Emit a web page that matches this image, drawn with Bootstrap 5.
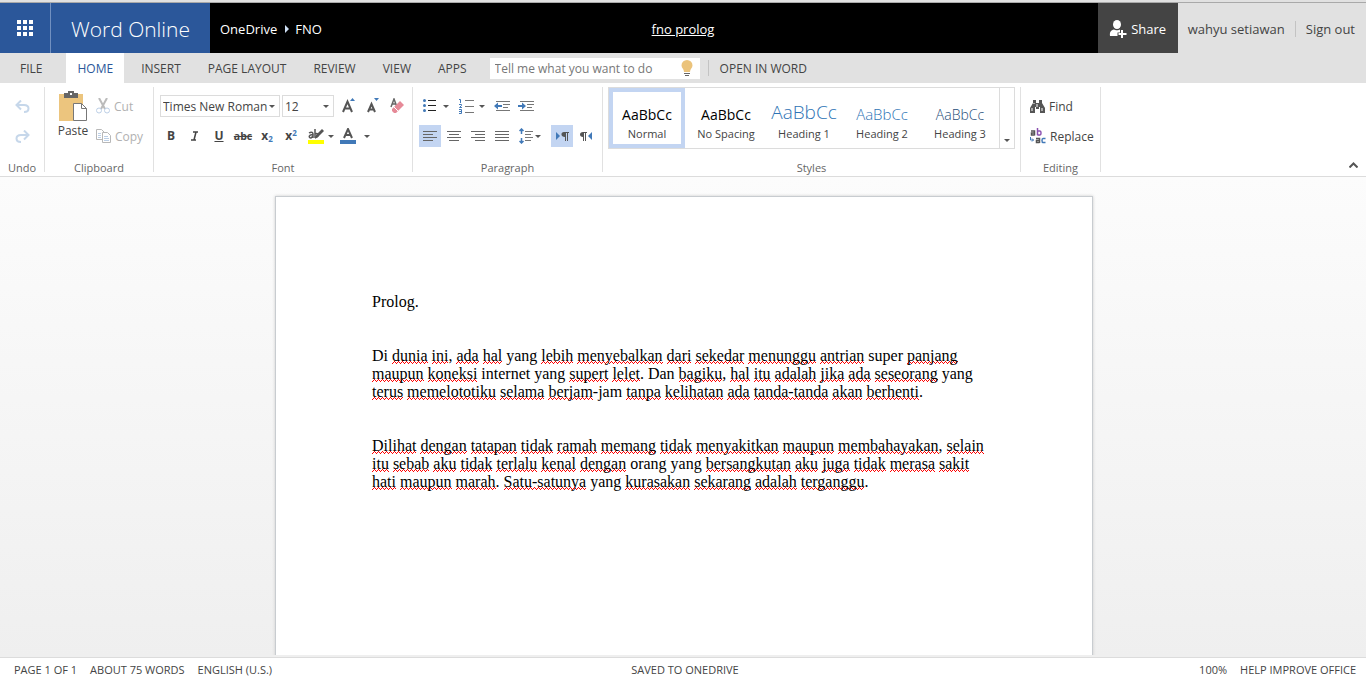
<!DOCTYPE html>
<html lang="en">
<head>
<meta charset="utf-8">
<meta name="viewport" content="width=device-width, initial-scale=1">
<title>fno prolog - Word Online</title>
<link href="https://cdn.jsdelivr.net/npm/bootstrap@5.3.0/dist/css/bootstrap.min.css" rel="stylesheet">
<style>
  :root { --brand:#2b579a; --chrome:#e1e1e1; --ink:#444; --blue:#4179b8; --pick:#c3d5f2; }
  body { font-family:"Open Sans","Noto Sans",sans-serif; font-size:12px; line-height:16px; color:var(--ink); background:#fff; }
  button { font:inherit; color:inherit; background:none; border:0; padding:0; }
  a { color:inherit; text-decoration:none; }
  svg { display:block; flex:none; }
  /* header */
  .edge { height:3px; background:var(--chrome); border-bottom:1px solid #a9a9a9; }
  .topbar { display:grid; grid-template-columns:1fr auto 1fr; height:50px; background:#000; color:#fff; font-size:13px; }
  .topbar > a, .topbar nav, .share, .account, .brandname { padding-top:2px; }
  .waffle { width:51px; background:var(--brand); border-right:1px solid #7190c0; }
  .brandname { width:159px; background:var(--brand); font-size:21px; font-weight:300; }
  .topbar nav { padding-left:10px; }
  .share { width:80px; background:var(--ink); }
  .account { background:var(--chrome); color:var(--ink); padding-left:10px; padding-right:11px; }
  .account a + a { border-left:1px solid #c3c3c3; margin-left:10px; padding-left:10px; }
  /* tabs */
  .tabs { height:30px; background:var(--chrome); gap:1px; }
  .tabs button, .tabs > a { height:30px; padding:2px 13px 0; }
  .tabs .file { padding:2px 23px 0 20px; }
  .tabs .on { background:#fff; color:var(--brand); padding:2px 11px 0; margin-right:3px; }
  .tell { width:210px; height:21px; background:#fff; margin-left:9px; padding-right:7px; }
  .tell input { border:0; outline:0; background:none; width:100%; min-width:0; padding:2px 5px 0; color:var(--ink); }
  .tell input::placeholder { color:#777; opacity:1; }
  .rule { width:1px; height:16px; background:#c3c3c3; margin-left:7px; }
  .tabs > .openword { padding:2px 10px 0; }
  /* ribbon */
  .ribbon { padding:4px 0; height:94px; border-bottom:1px solid #dcdcdc; }
  .grp { display:flex; flex-direction:column; justify-content:space-between; border-right:1px solid #e1e1e1; flex:none; }
  .grp h2 { font-size:11px; line-height:16px; font-weight:400; color:#666; text-align:center; margin:0 0 -4px; }
  .g-undo { width:45px; } .g-clip { width:109px; } .g-font { width:259px; } .g-par { width:190px; } .g-sty { width:418px; } .g-edit { width:80px; }
  .rows { display:flex; flex-direction:column; gap:8px; padding:8px 0 0 6px; }
  .rows > div { display:flex; align-items:center; gap:2px; height:22px; }
  .tool { width:22px; height:22px; display:flex; align-items:center; justify-content:center; }
  .tool.on { background:var(--pick); }
  .drop { width:34px; height:22px; display:flex; align-items:center; justify-content:space-between; padding:0 4px; }
  .drop::after { content:""; border:3px solid transparent; border-top-color:#555; border-bottom:0; }
  .cmd { display:flex; align-items:center; gap:4px; padding:0 0 0 3px; }
  .cmd span { padding-top:2px; }
  .off { color:#b1b1b1; }
  .script { font-size:8px; color:var(--blue); }
  .box { height:22px; border:1px solid #dcdcdc; border-radius:0; padding:1px 2px 0; color:var(--ink); appearance:none; background:#fff url("data:image/svg+xml,%3Csvg xmlns='http://www.w3.org/2000/svg' width='6' height='3'%3E%3Cpath d='M0 0h6L3 3z' fill='%23555'/%3E%3C/svg%3E") no-repeat right 4px center; }
  .face { width:120px; } .size { width:52px; margin-right:2px; }
  .gallery { display:flex; height:62px; margin:0 5px; border:1px solid #dcdcdc; }
  .gallery .look { width:78px; height:60px; padding-bottom:2px; border:4px solid transparent; display:flex; flex-direction:column; justify-content:flex-end; align-items:center; font-size:11px; line-height:16px; white-space:nowrap; }
  .gallery .look.on { border-color:var(--pick); width:76px; margin-right:2px; }
  .look b { font-weight:400; font-size:14px; line-height:22px; color:#000; }
  .look .h1s { font-size:19px; line-height:28px; font-weight:300; color:#2e74b5; }
  .look .h2s { font-size:15px; line-height:24px; font-weight:300; color:#2e74b5; }
  .look .h3s { font-weight:300; color:#1f4d78; }
  .more { flex:1; border-left:1px solid #dcdcdc; display:flex; align-items:flex-end; justify-content:center; padding-bottom:6px; }
  .more::after { content:""; border:3px solid transparent; border-top-color:#555; border-bottom:0; }
  /* document */
  .canvas { flex:1; min-height:0; overflow:hidden; padding:19px 0 0 2px; margin-bottom:2px; }
  .desk { background:linear-gradient(#fcfcfc,#efefef); flex:1; min-height:0; }
  .paper { width:818px; max-width:100%; min-height:1058px; margin:0 auto; padding:96px; background:#fff; border:1px solid #c8ccd0; box-shadow:0 0 3px #ccc; font:16px/18px "Liberation Serif",serif; color:#000; }
  .paper p { margin:0 0 36px; }
  /* spelling marks: three one-pixel rows that make a zigzag */
  .paper u {
    text-decoration:none; background-repeat:repeat-x; background-size:4px 1px,2px 1px,4px 1px;
    background-image:
      linear-gradient(90deg,red 1px,transparent 1px),
      linear-gradient(90deg,transparent 1px,red 1px),
      linear-gradient(90deg,transparent 2px,red 2px,red 3px,transparent 3px);
    background-position:0 100%,0 calc(100% - 1px),0 calc(100% - 2px);
  }
  .status { height:23px; border-top:1px solid #dcdcdc; background:#fff; padding:2px 10px 0 14px; font-size:11px; display:grid; grid-template-columns:1fr auto 1fr; align-items:center; }
  .status div { display:flex; gap:13px; }
</style>
</head>
<body class="vh-100 d-flex flex-column overflow-hidden">
<div class="edge"></div>
<header class="topbar">
  <div class="d-flex">
    <button class="waffle d-flex align-items-center justify-content-center" aria-label="Apps">
      <svg width="16" height="16" fill="#fff"><path d="M0 0h4v4H0zM6 0h4v4H6zM12 0h4v4h-4zM0 6h4v4H0zM6 6h4v4H6zM12 6h4v4h-4zM0 12h4v4H0zM6 12h4v4H6zM12 12h4v4h-4z"/></svg>
    </button>
    <a href="#" class="brandname d-flex align-items-center justify-content-center">Word Online</a>
    <nav class="d-flex align-items-center" aria-label="Location">
      <a href="#">OneDrive</a>
      <svg class="ms-2 me-1" width="6" height="8" fill="#cfe0f5"><path d="M0 0l4 4-4 4z"/></svg>
      <a href="#">FNO</a>
    </nav>
  </div>
  <a href="#" class="align-self-center text-decoration-underline">fno prolog</a>
  <div class="d-flex justify-content-end">
    <button class="share d-flex align-items-center justify-content-center gap-1">
      <svg width="18" height="18" fill="#fff"><ellipse cx="8" cy="4.500" rx="4" ry="4.500"/><path d="M5 9.500c1 1 5 1 6 0v3H8.500V16H1c-.5-4 1-6 4-6.500z"/><path d="M12 10h2v3h3.500v2H14v3h-2v-3H9.500v-2H12z"/></svg>
      Share</button>
    <div class="account d-flex align-items-center"><a href="#">wahyu setiawan</a><a href="#">Sign out</a></div>
  </div>
</header>
<nav class="tabs d-flex align-items-center" aria-label="Ribbon tabs">
  <button class="file">FILE</button><button class="on">HOME</button><button>INSERT</button><button>PAGE LAYOUT</button><button>REVIEW</button><button>VIEW</button><button>APPS</button>
  <div class="tell d-flex align-items-center">
    <input type="text" aria-label="Tell me" placeholder="Tell me what you want to do">
    <svg width="12" height="16"><path d="M6 0a5.500 5.500 0 0 1 5.500 5.500C11.500 8 9 9 9 12H3C3 9 .5 8 .5 5.500A5.500 5.500 0 0 1 6 0z" fill="#ebc37b"/><path d="M3 13h6v1H3zM4 15h4v1H4z" fill="#666"/></svg>
  </div>
  <span class="rule"></span>
  <a href="#" class="openword d-flex align-items-center">OPEN IN WORD</a>
</nav>
<section class="ribbon d-flex" aria-label="Home ribbon">
  <div class="grp g-undo">
    <div class="rows align-items-center ps-0">
      <div><button class="tool" aria-label="Undo"><svg width="15" height="13" fill="none" stroke="#c6d7ea" stroke-width="2"><path d="M6 .5L1.500 5 6 9.500M2 5h7c6 0 6 7 0 7"/></svg></button></div>
      <div><button class="tool" aria-label="Redo"><svg width="15" height="13" fill="none" stroke="#c6d7ea" stroke-width="2"><path d="M9 .5L13.500 5 9 9.500M13 5H6c-6 0-6 7 0 7"/></svg></button></div>
    </div>
    <h2>Undo</h2>
  </div>
  <div class="grp g-clip">
    <div class="d-flex">
      <button class="d-flex flex-column align-items-center ms-2 ps-1 pt-1">
        <svg width="32" height="32"><path d="M2 3h24v27H2z" fill="#ecc57e"/><path d="M7 2h4V0h6v2h4v5H7z" fill="#666"/><path d="M13 2h2v2h-2z" fill="#fff"/><path d="M16.500 12.500h8l5 5v12h-13z" fill="#fff" stroke="#777"/><path d="M24.500 12.500v5h5" fill="none" stroke="#777"/></svg>
        <span>Paste</span>
      </button>
      <div class="rows ps-1">
        <div><button class="off cmd"><svg width="14" height="16" fill="none" stroke="#bbb" stroke-width="2"><path d="M3 0l6 11M11 0L5 11"/><g stroke="#bccfe6" stroke-width="1"><circle cx="3" cy="12.500" r="2.500"/><circle cx="11" cy="12.500" r="2.500"/></g></svg><span>Cut</span></button></div>
        <div><button class="off cmd"><svg width="15" height="14" fill="#fff" stroke="#b8b8b8"><path d="M.5.5h5l3 3v7h-8z"/><path d="M6.500 3.500h5l3 3v7h-8z"/><path d="M2 4.500h3M2 6.500h3M2 8.500h3M8 7.500h4M8 9.500h5M8 11.500h5" stroke="#bccfe6"/></svg><span>Copy</span></button></div>
      </div>
    </div>
    <h2>Clipboard</h2>
  </div>
  <div class="grp g-font">
    <div class="rows">
      <div>
        <select class="box face" aria-label="Font"><option>Times New Roman</option></select>
        <select class="box size" aria-label="Font size"><option>12</option></select>
        <button class="tool" aria-label="Grow font"><svg width="14" height="16"><path d="M1 14L5.500 3.500 10 14M3 10.500h5" fill="none" stroke="#555" stroke-width="2"/><path d="M8 3l2.500-3L13 3z" fill="#4179b8"/></svg></button>
        <button class="tool" aria-label="Shrink font"><svg width="14" height="16"><path d="M2 14l3.500-8L9 14M3.500 11.500h4" fill="none" stroke="#555" stroke-width="2"/><path d="M8 0h5l-2.500 3z" fill="#4179b8"/></svg></button>
        <button class="tool" aria-label="Clear formatting"><svg width="15" height="16"><path d="M1 9l3-8 3 8M2 6h4" fill="none" stroke="#666" stroke-width="1.500"/><path d="M2 11l8-8 4 4-8 8H4l-2-2z" fill="#e68a98"/><path d="M4 9l4 4" stroke="#fff"/></svg></button>
      </div>
      <div>
        <button class="tool fw-bold" aria-label="Bold">B</button>
        <button class="tool" aria-label="Italic"><svg width="8" height="10" fill="none" stroke="#444" stroke-width="1.500"><path d="M2 1h5M0 9h5M5 1L3 9"/></svg></button>
        <button class="tool fw-bold text-decoration-underline" aria-label="Underline">U</button>
        <button class="tool fw-bold" aria-label="Strikethrough"><small class="text-decoration-line-through">abc</small></button>
        <button class="tool fw-bold" aria-label="Subscript"><span>x<sub class="script">2</sub></span></button>
        <button class="tool fw-bold" aria-label="Superscript"><span>x<sup class="script">2</sup></span></button>
        <button class="drop" aria-label="Highlight"><svg width="16" height="16"><path d="M0 12h16v4H0z" fill="#ff0"/><path d="M1 5c3-2 4 0 4 1v4M5 7C1 6 0 10 3 10l2-2M7 1v9M7 6c4-2 4 4 0 3" fill="none" stroke="#555" stroke-width="1.500"/><path d="M14 1l2 2-6 6-3 2 1-4z" fill="#555"/></svg></button>
        <button class="drop ps-0" aria-label="Font color"><svg width="16" height="16"><path d="M0 12h16v4H0z" fill="#4179b8"/><path d="M4 10L8 1l4 9M5.500 7h5" fill="none" stroke="#555" stroke-width="2"/></svg></button>
      </div>
    </div>
    <h2>Font</h2>
  </div>
  <div class="grp g-par">
    <div class="rows">
      <div>
        <button class="drop" aria-label="Bullets"><svg width="13" height="14"><path d="M5 1.500h8M5 6.500h8M5 11.500h8" stroke="#222" stroke-width="1"/><g fill="#4179b8"><circle cx="1.500" cy="1.500" r="1.500"/><circle cx="1.500" cy="6.500" r="1.500"/><circle cx="1.500" cy="11.500" r="1.500"/></g></svg></button>
        <button class="drop" aria-label="Numbering"><svg width="15" height="16" fill="none"><path d="M6 2.500h9M6 8.500h9M6 14.500h9" stroke="#777"/><path d="M0 1.500h1.500V5M0 6.500h2.500v1L.5 9.500H3M0 11.500h2.500v4H0M0 13.500h2" stroke="#4179b8"/></svg></button>
        <button class="tool" aria-label="Decrease indent"><svg width="16" height="12"><path d="M2 1.500h14M9 4.500h7M9 7.500h5M2 10.500h14" stroke="#777"/><path d="M0 6l4-3.500V5h4v2H4v2.500z" fill="#4179b8"/></svg></button>
        <button class="tool" aria-label="Increase indent"><svg width="16" height="12"><path d="M2 1.500h14M9 4.500h7M9 7.500h5M2 10.500h14" stroke="#777"/><path d="M8 6L4 2.500V5H0v2h4v2.500z" fill="#4179b8"/></svg></button>
      </div>
      <div>
        <button class="tool on" aria-label="Align left"><svg width="14" height="12" stroke="#666"><path d="M0 1.500h14M0 4.500h10M0 7.500h14M0 10.500h10"/></svg></button>
        <button class="tool" aria-label="Center"><svg width="14" height="12" stroke="#666"><path d="M0 1.500h14M2 4.500h10M0 7.500h14M2 10.500h10"/></svg></button>
        <button class="tool" aria-label="Align right"><svg width="14" height="12" stroke="#666"><path d="M0 1.500h14M4 4.500h10M0 7.500h14M4 10.500h10"/></svg></button>
        <button class="tool" aria-label="Justify"><svg width="14" height="12" stroke="#666"><path d="M0 1.500h14M0 4.500h14M0 7.500h14M0 10.500h14"/></svg></button>
        <button class="drop ps-1 pe-2" aria-label="Line spacing"><svg width="15" height="16" fill="none"><path d="M6 3.500h8M6 6.500h6M6 9.500h8M6 12.500h6" stroke="#777"/><path d="M2.500 1v5M2.500 10v5M.5 3l2-2 2 2M.5 13l2 2 2-2" stroke="#4179b8" stroke-width="1.500"/></svg></button>
        <button class="tool on" aria-label="Left to right"><svg width="14" height="10"><path d="M1 1l4 4-4 4z" fill="#4179b8"/><path d="M9 1h5v1h-1v8h-1V2h-1v8h-1V6C5.500 6 5.500 1 9 1z" fill="#555"/></svg></button>
        <button class="tool" aria-label="Right to left"><svg width="14" height="10"><path d="M13 1L9 5l4 4z" fill="#4179b8"/><path d="M4 1h4v1H7v8H6V2H5v8H4V6C0 6 0 1 4 1z" fill="#555"/></svg></button>
      </div>
    </div>
    <h2>Paragraph</h2>
  </div>
  <div class="grp g-sty">
    <div class="gallery">
      <button class="look on"><b>AaBbCc</b>Normal</button>
      <button class="look"><b>AaBbCc</b>No Spacing</button>
      <button class="look"><b class="h1s">AaBbCc</b>Heading 1</button>
      <button class="look"><b class="h2s">AaBbCc</b>Heading 2</button>
      <button class="look"><b class="h3s">AaBbCc</b>Heading 3</button>
      <button class="more" aria-label="More styles"></button>
    </div>
    <h2>Styles</h2>
  </div>
  <div class="grp g-edit">
    <div class="rows">
      <div><button class="cmd"><svg width="15" height="13" fill="#555"><path d="M3 0h3v3h3V0h3v3l3 5v5h-5V7H9v2H6V7H5v6H0V8l3-5z"/><path d="M2 8v3M4 3v1M12 8v3M7 4v3" stroke="#fff" stroke-width="1"/></svg><span>Find</span></button></div>
      <div><button class="cmd"><svg width="16" height="16" fill="none" stroke="#555" stroke-width="1.500"><path d="M1 3h3.500v4.500M4.500 5H1.500v2h3"/><path d="M7.500 0v7.300M7.500 3H10q1 0 1 2t-1 2H7.500" stroke="#8a4fb0"/><path d="M6 10.500h3.500V15M9.500 12.500h-3v2h3"/><path d="M15.500 10.500H13q-1 0-1 2t1 2h2.500" stroke="#4179b8"/><path d="M.5 9v3h3M2 10.500L3.500 12 2 13.500" stroke="#4179b8" stroke-width="1"/></svg><span>Replace</span></button></div>
    </div>
    <h2>Editing</h2>
  </div>
  <button class="ms-auto align-self-end me-1 p-1" aria-label="Collapse ribbon"><svg width="9" height="6" fill="none" stroke="#555" stroke-width="2"><path d="M.5 5.500l4-4 4 4"/></svg></button>
</section>
<main class="desk d-flex flex-column">
  <div class="canvas">
    <article class="paper">
      <p>Prolog.</p>
      <p>Di <u>dunia</u> <u>ini</u>, <u>ada</u> <u>hal</u> yang <u>lebih</u> <u>menyebalkan</u> <u>dari</u> <u>sekedar</u> <u>menunggu</u> <u>antrian</u> super <u>panjang</u> <u>maupun</u> <u>koneksi</u> internet yang <u>supert</u> <u>lelet</u>. Dan <u>bagiku</u>, <u>hal</u> <u>itu</u> <u>adalah</u> <u>jika</u> <u>ada</u> <u>seseorang</u> yang <u>terus</u> <u>memelototiku</u> <u>selama</u> <u>berjam</u>-jam <u>tanpa</u> <u>kelihatan</u> <u>ada</u> <u>tanda-tanda</u> <u>akan</u> <u>berhenti</u>.</p>
      <p><u>Dilihat</u> <u>dengan</u> <u>tatapan</u> <u>tidak</u> <u>ramah</u> <u>memang</u> <u>tidak</u> <u>menyakitkan</u> <u>maupun</u> <u>membahayakan</u>, <u>selain</u> <u>itu</u> <u>sebab</u> <u>aku</u> <u>tidak</u> <u>terlalu</u> <u>kenal</u> <u>dengan</u> orang yang <u>bersangkutan</u> <u>aku</u> <u>juga</u> <u>tidak</u> <u>merasa</u> <u>sakit</u> <u>hati</u> <u>maupun</u> <u>marah</u>. <u>Satu-satunya</u> yang <u>kurasakan</u> <u>sekarang</u> <u>adalah</u> <u>terganggu</u>.</p>
    </article>
  </div>
</main>
<footer class="status">
  <div><button>PAGE 1 OF 1</button><button>ABOUT 75 WORDS</button><button>ENGLISH (U.S.)</button></div>
  <span>SAVED TO ONEDRIVE</span>
  <div class="justify-content-end"><button>100%</button><a href="#">HELP IMPROVE OFFICE</a></div>
</footer>
<script src="https://cdn.jsdelivr.net/npm/bootstrap@5.3.0/dist/js/bootstrap.bundle.min.js"></script>
</body>
</html>
